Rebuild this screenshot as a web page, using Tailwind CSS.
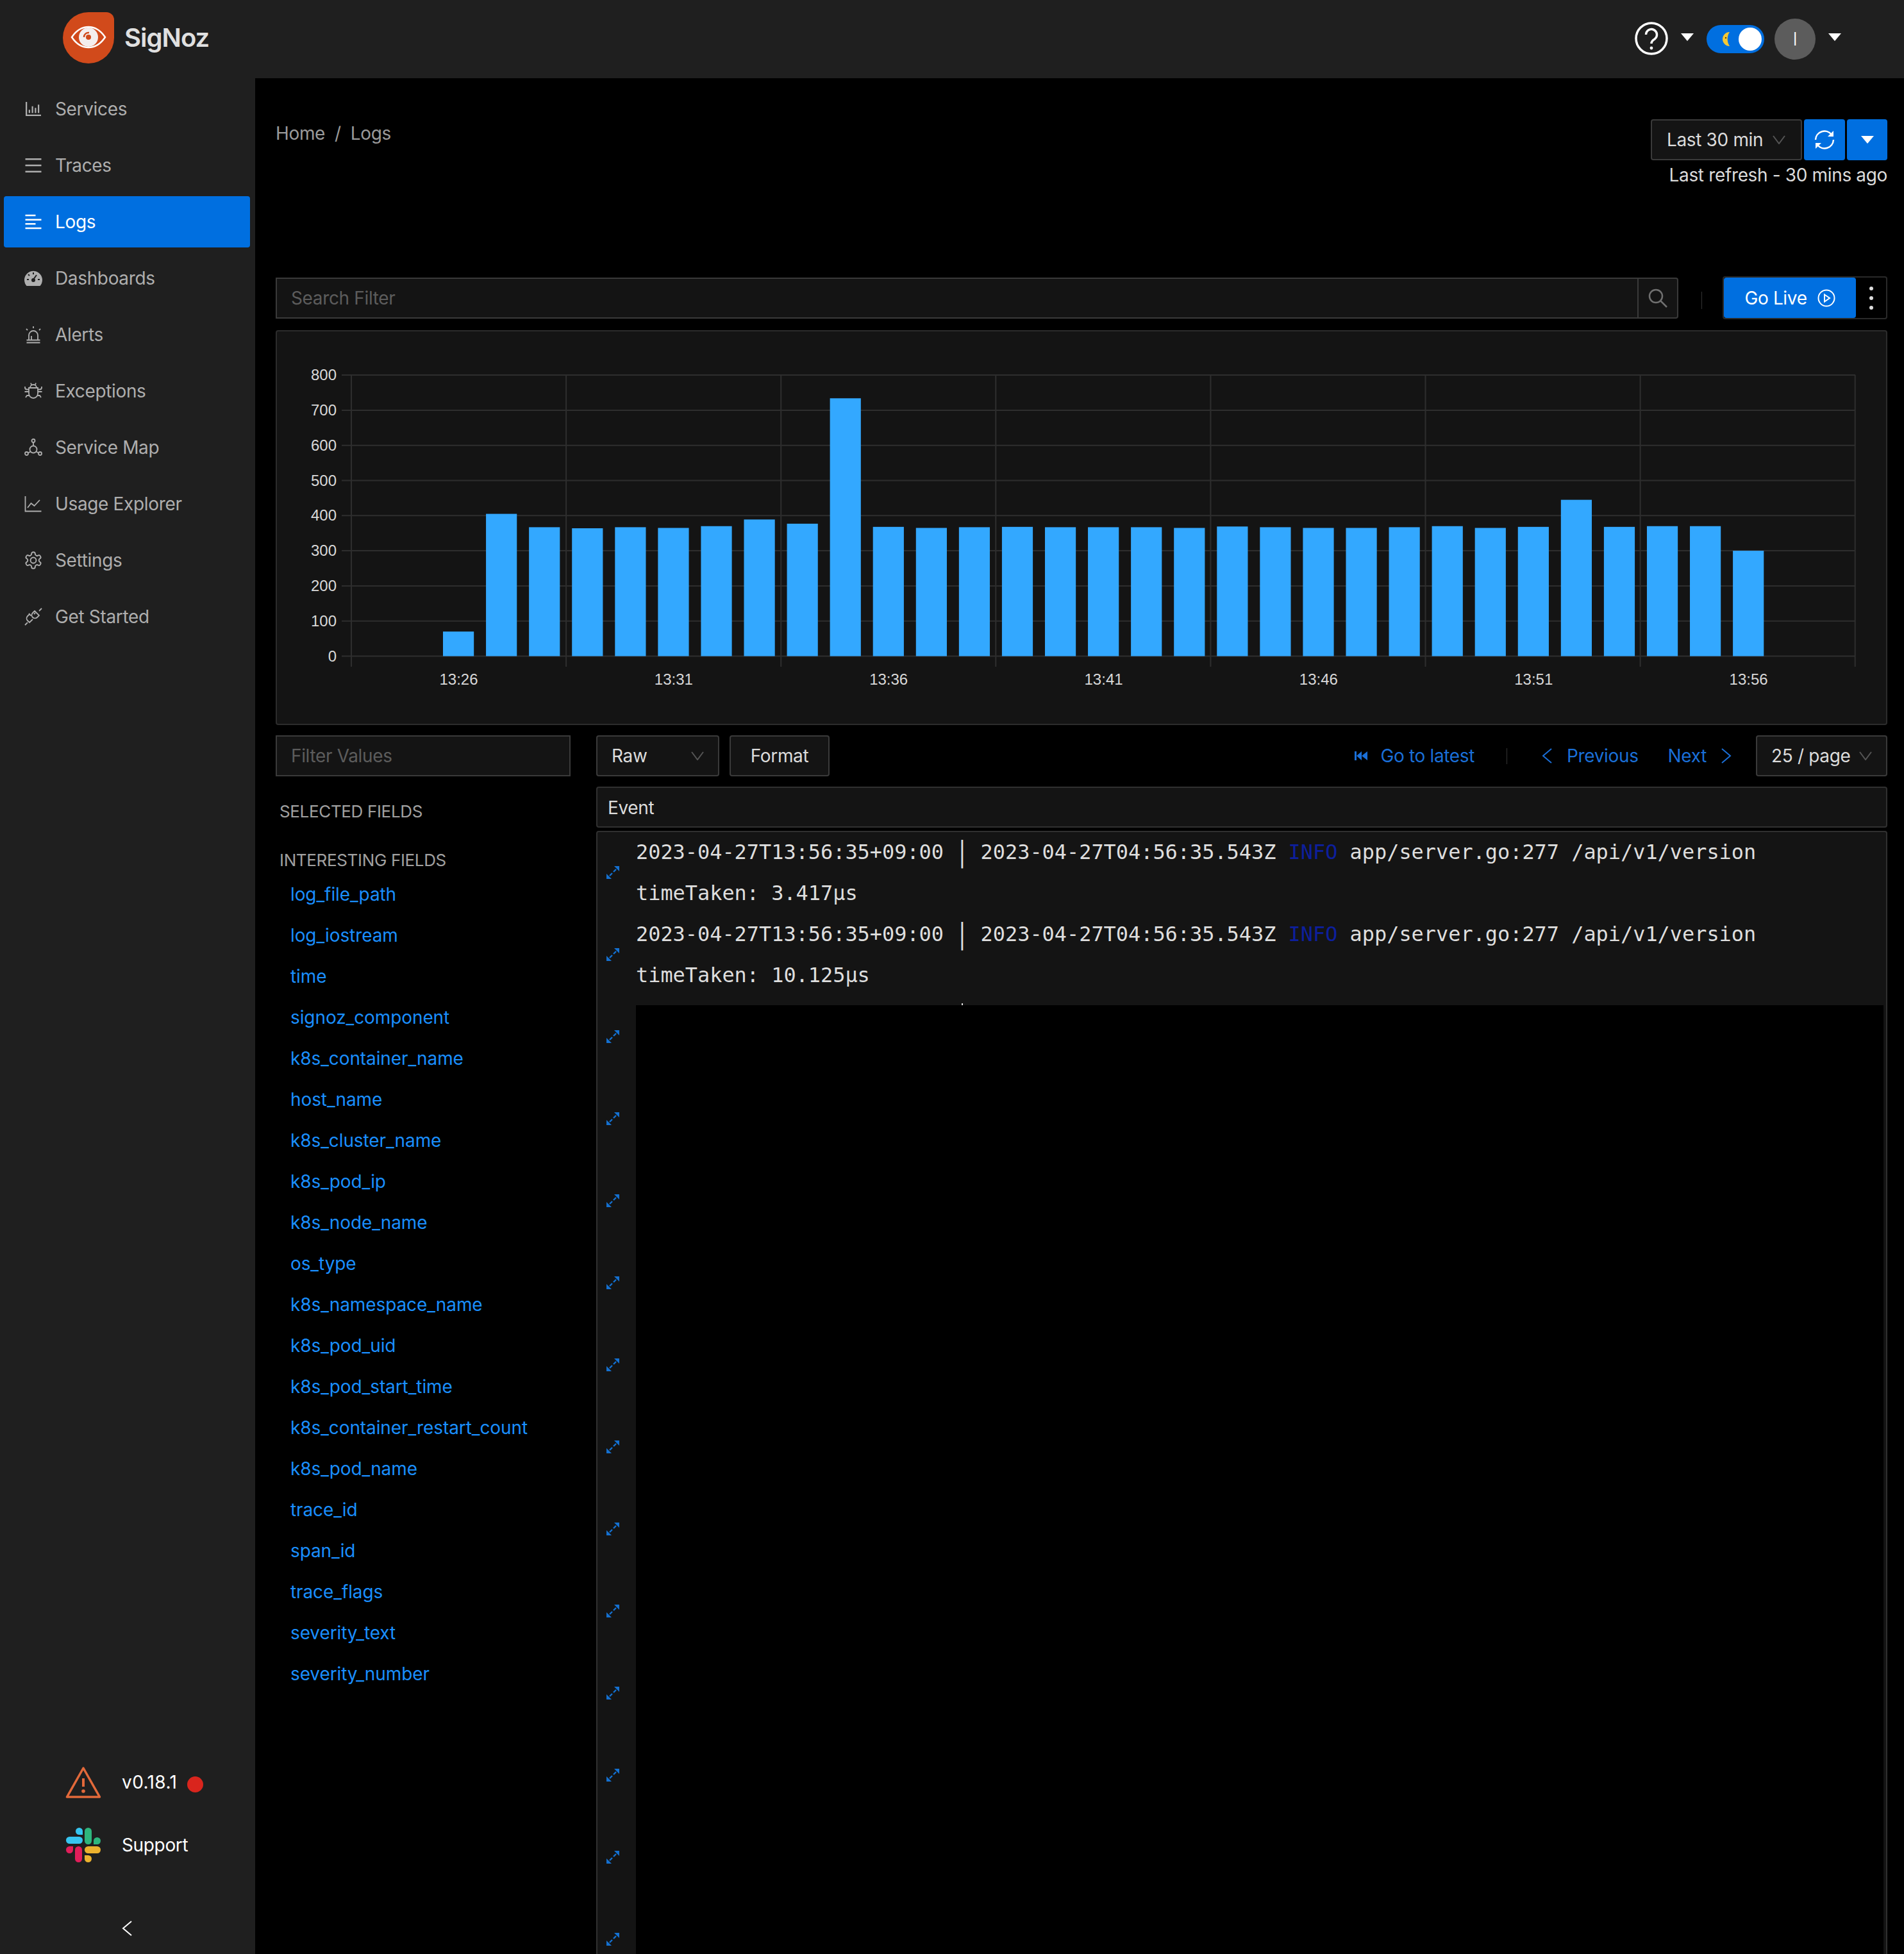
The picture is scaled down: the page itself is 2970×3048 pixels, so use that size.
<!DOCTYPE html>
<html lang="en">
<head>
    <meta charset="UTF-8">
    <title>SigNoz Logs</title>
    <script src="https://cdn.jsdelivr.net/npm/@tailwindcss/browser@4"></script>
</head>
<body class="bg-black font-['Inter',sans-serif] text-[28px] tracking-[-0.35px] text-[#dcdcdc]">
    <svg class="hidden">
        <symbol id="expand" viewBox="0 0 20 20">
            <path d="M11 9l4-4M9 11l-4 4" stroke="currentColor" stroke-width="2.400" fill="none"/>
            <path d="M12 0h8v8zM8 20H0v-8z" fill="currentColor"/>
        </symbol>
    </svg>

    <div class="flex flex-col w-[2970px] h-[3048px] overflow-hidden">
        <header class="flex items-center justify-between h-[122px] shrink-0 bg-[#1f1f1f]">
            <div class="flex items-center gap-[16px] pl-[98px] mb-[5px]">
                <svg class="w-[80px] h-[80px]" viewBox="0 0 80 80">
                    <path d="M40 0h28a12 12 0 0 1 12 12v28a40 40 0 0 1-80 0A40 40 0 0 1 40 0z" fill="#d14a1b"/>
                    <path d="M14 39C22 27 31 23 40 23s18 4 26 16C58 51 49 55 40 55S22 51 14 39z" fill="none" stroke="#fff" stroke-width="2.500"/>
                    <circle cx="40" cy="39" r="15" fill="#f4eeee"/>
                    <circle cx="40" cy="39" r="4" fill="#d14a1b"/>
                    <path d="M33 39a7 7 0 0 1 8-7" fill="none" stroke="#d14a1b" stroke-width="2.500"/>
                </svg>
                <span class="text-[40px] font-semibold text-[#e0e0e0] tracking-[-1px]">SigNoz</span>
            </div>
            <div class="flex items-center pr-[98px]">
                <svg class="w-[52px] h-[52px] mb-[2px]" viewBox="0 0 52 52" fill="none" stroke="#fff">
                    <circle cx="26" cy="26" r="24" stroke-width="3.500"/>
                    <path d="M17.500 20a8.500 8.500 0 1 1 13.500 7C27.500 29 26 31 26 34" stroke-width="3.500"/>
                    <circle cx="26" cy="41" r="2.400" fill="#fff" stroke="none"/>
                </svg>
                <svg class="w-[20px] h-[12px] ml-[20px] mb-[6px]" viewBox="0 0 20 12"><path d="M0 0h20L10 12z" fill="#fff"/></svg>
                <div class="flex items-center justify-end w-[90px] h-[44px] ml-[20px] pr-[4px] rounded-full bg-[#006fe0] relative">
                    <svg class="absolute left-[23px] top-[11px] w-[14px] h-[22px]" viewBox="0 0 14 22">
                        <path d="M13 0A11 11 0 1 0 13 22 20 20 0 0 1 13 0z" fill="#f5c836"/>
                        <circle cx="7" cy="9" r="1.200" fill="#5a4300"/>
                    </svg>
                    <div class="w-[36px] h-[36px] rounded-full bg-white"></div>
                </div>
                <div class="flex items-center justify-center w-[64px] h-[64px] ml-[16px] rounded-full bg-[#5c5c5c] text-white font-light">I</div>
                <svg class="w-[20px] h-[12px] ml-[20px] mb-[6px]" viewBox="0 0 20 12"><path d="M0 0h20L10 12z" fill="#fff"/></svg>
            </div>
        </header>

        <div class="flex flex-1 min-h-0">
            <aside class="flex flex-col w-[398px] shrink-0 bg-[#1f1f1f] pt-[8px]">
                <nav class="flex flex-col gap-[8px] pl-[6px] pr-[8px] text-[#aeaeae]">
                    <a class="flex items-center gap-[20px] h-[80px] pl-[32px]">
                        <svg class="w-[28px] h-[28px]" viewBox="64 64 896 896" fill="currentColor"><path d="M888 792H200V168c0-4.400-3.600-8-8-8h-56c-4.400 0-8 3.600-8 8v688c0 4.400 3.600 8 8 8h752c4.400 0 8-3.600 8-8v-56c0-4.400-3.600-8-8-8zm-600-80h56c4.400 0 8-3.600 8-8V560c0-4.400-3.600-8-8-8h-56c-4.400 0-8 3.600-8 8v144c0 4.400 3.600 8 8 8zm152 0h56c4.400 0 8-3.600 8-8V384c0-4.400-3.600-8-8-8h-56c-4.400 0-8 3.600-8 8v320c0 4.400 3.600 8 8 8zm152 0h56c4.400 0 8-3.600 8-8V462c0-4.400-3.600-8-8-8h-56c-4.400 0-8 3.600-8 8v242c0 4.400 3.600 8 8 8zm152 0h56c4.400 0 8-3.600 8-8V304c0-4.400-3.600-8-8-8h-56c-4.400 0-8 3.600-8 8v400c0 4.400 3.600 8 8 8z"/></svg>
                        Services
                    </a>
                    <a class="flex items-center gap-[20px] h-[80px] pl-[32px]">
                        <svg class="w-[28px] h-[28px]" viewBox="64 64 896 896" fill="currentColor"><path d="M904 160H120c-4.400 0-8 3.600-8 8v64c0 4.400 3.600 8 8 8h784c4.400 0 8-3.600 8-8v-64c0-4.400-3.600-8-8-8zm0 624H120c-4.400 0-8 3.600-8 8v64c0 4.400 3.600 8 8 8h784c4.400 0 8-3.600 8-8v-64c0-4.400-3.600-8-8-8zm0-312H120c-4.400 0-8 3.600-8 8v64c0 4.400 3.600 8 8 8h784c4.400 0 8-3.600 8-8v-64c0-4.400-3.600-8-8-8z"/></svg>
                        Traces
                    </a>
                    <a class="flex items-center gap-[20px] h-[80px] pl-[32px] rounded-[4px] bg-[#006fe0] text-white">
                        <svg class="w-[28px] h-[28px]" viewBox="64 64 896 896" fill="currentColor"><path d="M120 230h496c4.400 0 8-3.600 8-8v-60c0-4.400-3.600-8-8-8H120c-4.400 0-8 3.600-8 8v60c0 4.400 3.600 8 8 8zm0 424h496c4.400 0 8-3.600 8-8v-60c0-4.400-3.600-8-8-8H120c-4.400 0-8 3.600-8 8v60c0 4.400 3.600 8 8 8zm784 140H120c-4.400 0-8 3.600-8 8v60c0 4.400 3.600 8 8 8h784c4.400 0 8-3.600 8-8v-60c0-4.400-3.600-8-8-8zm0-424H120c-4.400 0-8 3.600-8 8v60c0 4.400 3.600 8 8 8h784c4.400 0 8-3.600 8-8v-60c0-4.400-3.600-8-8-8z"/></svg>
                        Logs
                    </a>
                    <a class="flex items-center gap-[20px] h-[80px] pl-[32px]">
                        <svg class="w-[28px] h-[28px]" viewBox="0 0 28 28">
                            <path d="M3.500 26A14 14 0 1 1 24.500 26z" fill="currentColor"/>
                            <path d="M14 16l5-7M14 5v3M6 8l2 2M4 16h3M21 16h3" stroke="#1f1f1f" stroke-width="2" fill="none"/>
                            <circle cx="14" cy="17" r="3" fill="#1f1f1f"/>
                        </svg>
                        Dashboards
                    </a>
                    <a class="flex items-center gap-[20px] h-[80px] pl-[32px]">
                        <svg class="w-[28px] h-[28px]" viewBox="0 0 28 28" fill="none" stroke="currentColor" stroke-width="1.800">
                            <path d="M7 22V15a7 7 0 0 1 14 0v7M3.500 22.500h21M3.500 26.500h21M11 22v-6M14 1v3M3 5l2 2M25 5l-2 2"/>
                        </svg>
                        Alerts
                    </a>
                    <a class="flex items-center gap-[20px] h-[80px] pl-[32px]">
                        <svg class="w-[28px] h-[28px]" viewBox="0 0 28 28" fill="none" stroke="currentColor" stroke-width="1.800">
                            <path d="M7 9h14v9a7 7 0 0 1-14 0zM9 9a5 5 0 0 1 10 0M1 7v1.500a3 3 0 0 0 3 3h3M27 7v1.500a3 3 0 0 1-3 3h-3M0.500 15h6.500M27.500 15h-6.500M2 24l2-3h3.500M26 24l-2-3h-3.500M10 1.500l1 2.500M18 1.500l-1 2.500"/>
                        </svg>
                        Exceptions
                    </a>
                    <a class="flex items-center gap-[20px] h-[80px] pl-[32px]">
                        <svg class="w-[28px] h-[28px]" viewBox="0 0 28 28" fill="none" stroke="currentColor" stroke-width="1.800">
                            <circle cx="14" cy="3.500" r="2.500"/><circle cx="3.500" cy="23.500" r="2.500"/><circle cx="24.500" cy="23.500" r="2.500"/><circle cx="14" cy="17" r="5.500"/>
                            <path d="M14 6v5.500M9.500 20.500L6 22.500M18.500 20.500L22 22.500"/>
                        </svg>
                        Service Map
                    </a>
                    <a class="flex items-center gap-[20px] h-[80px] pl-[32px]">
                        <svg class="w-[28px] h-[28px]" viewBox="0 0 28 28" fill="none" stroke="currentColor" stroke-width="1.800">
                            <path d="M1.500 2v23.500h25M5 20l5.500-7 5 4L24 8"/>
                        </svg>
                        Usage Explorer
                    </a>
                    <a class="flex items-center gap-[20px] h-[80px] pl-[32px]">
                        <svg class="w-[28px] h-[28px]" viewBox="1 1 22 22" fill="none" stroke="currentColor" stroke-width="1.500">
                            <path d="M12.220 2h-.44a2 2 0 0 0-2 2v.18a2 2 0 0 1-1 1.730l-.43.25a2 2 0 0 1-2 0l-.15-.08a2 2 0 0 0-2.730.73l-.22.38a2 2 0 0 0 .73 2.730l.15.1a2 2 0 0 1 1 1.720v.51a2 2 0 0 1-1 1.740l-.15.09a2 2 0 0 0-.73 2.730l.22.38a2 2 0 0 0 2.730.73l.15-.08a2 2 0 0 1 2 0l.43.25a2 2 0 0 1 1 1.730V20a2 2 0 0 0 2 2h.44a2 2 0 0 0 2-2v-.18a2 2 0 0 1 1-1.730l.43-.25a2 2 0 0 1 2 0l.15.08a2 2 0 0 0 2.730-.73l.22-.39a2 2 0 0 0-.73-2.730l-.15-.08a2 2 0 0 1-1-1.740v-.5a2 2 0 0 1 1-1.740l.15-.09a2 2 0 0 0 .73-2.730l-.22-.38a2 2 0 0 0-2.730-.73l-.15.08a2 2 0 0 1-2 0l-.43-.25a2 2 0 0 1-1-1.730V4a2 2 0 0 0-2-2z"/>
                            <circle cx="12" cy="12" r="3.500"/>
                        </svg>
                        Settings
                    </a>
                    <a class="flex items-center gap-[20px] h-[80px] pl-[32px]">
                        <svg class="w-[28px] h-[28px]" viewBox="0 0 28 28" fill="none" stroke="currentColor" stroke-width="1.800">
                            <path d="M16 5l7 7-3 3a5 5 0 0 1-7 0a5 5 0 0 1 0-7zM23 5l4-4M10.500 12.500L7 9M8 10L5 13a5 5 0 0 0 0 7l3 3 5-5M1 27l4-4M17 8l-2 2"/>
                        </svg>
                        Get Started
                    </a>
                </nav>

                <div class="mt-auto flex flex-col text-white">
                    <div class="flex items-center h-[64px] pl-[102px]">
                        <svg class="w-[56px] h-[50px]" viewBox="0 0 56 50" fill="none">
                            <path d="M28 3L2.500 48h51z" stroke="#e2693a" stroke-width="3.500" stroke-linejoin="round"/>
                            <path d="M28 19v13" stroke="#e2693a" stroke-width="4"/>
                            <circle cx="28" cy="39" r="2.800" fill="#e2693a"/>
                        </svg>
                        <span class="ml-[32px] tracking-[0.4px]">v0.18.1</span>
                        <span class="w-[25px] h-[25px] ml-[16px] mt-[6px] rounded-full bg-[#d9251d]"></span>
                    </div>
                    <div class="flex items-center h-[64px] mt-[34px] pl-[103px]">
                        <svg class="w-[54px] h-[54px]" viewBox="0 0 54 54">
                            <rect x="15" y="0" width="11" height="11" rx="5.500" fill="#36c5f0"/><rect x="20" y="5" width="6" height="6" fill="#36c5f0"/>
                            <rect x="0" y="14" width="26" height="11" rx="5.500" fill="#36c5f0"/>
                            <rect x="29" y="0" width="11" height="26" rx="5.500" fill="#2eb67d"/>
                            <rect x="43" y="15" width="11" height="11" rx="5.500" fill="#2eb67d"/><rect x="43" y="20" width="6" height="6" fill="#2eb67d"/>
                            <rect x="0" y="29" width="11" height="11" rx="5.500" fill="#e01e5a"/><rect x="5" y="29" width="6" height="6" fill="#e01e5a"/>
                            <rect x="14" y="29" width="11" height="25" rx="5.500" fill="#e01e5a"/>
                            <rect x="29" y="29" width="25" height="11" rx="5.500" fill="#ecb22e"/>
                            <rect x="29" y="43" width="11" height="11" rx="5.500" fill="#ecb22e"/><rect x="29" y="43" width="6" height="6" fill="#ecb22e"/>
                        </svg>
                        <span class="ml-[33px]">Support</span>
                    </div>
                    <div class="flex items-center h-[30px] mt-[83px] mb-[25px] pl-[190px]">
                        <svg class="w-[16px] h-[24px]" viewBox="0 0 16 24" fill="none" stroke="#fff" stroke-width="2"><path d="M15 1L2 12l13 11"/></svg>
                    </div>
                </div>
            </aside>

            <main class="flex-1 min-w-0 pt-[64px] pl-[32px] pr-[26px]">
                <div class="flex justify-between h-[245px]">
                    <div class="flex gap-[15px] h-[44px] items-center text-[#9a9a9a]">
                        <span>Home</span><span>/</span><span>Logs</span>
                    </div>
                    <div class="flex flex-col items-end">
                        <div class="flex gap-[3px]">
                            <div class="flex items-center justify-between w-[236px] h-[64px] pl-[23px] pr-[24px] border-2 border-[#3a3a3a] rounded-[4px] bg-[#141414]">
                                <span>Last 30 min</span>
                                <svg class="w-[20px] h-[14px]" viewBox="0 0 20 14" fill="none" stroke="#555" stroke-width="2"><path d="M1 1l9 12 9-12"/></svg>
                            </div>
                            <div class="flex items-center justify-center w-[64px] h-[64px] rounded-[4px] bg-[#006fe0]">
                                <svg class="w-[32px] h-[32px]" viewBox="0 0 32 32" fill="none" stroke="#fff" stroke-width="2.500">
                                    <path d="M2 16A14 14 0 0 1 27 8M30 16A14 14 0 0 1 5 24"/>
                                    <path d="M30 2v9h-9z" fill="#fff" stroke="none"/><path d="M2 30v-9h9z" fill="#fff" stroke="none"/>
                                </svg>
                            </div>
                            <div class="flex items-center justify-center w-[63px] h-[64px] rounded-[4px] bg-[#006fe0]">
                                <svg class="w-[20px] h-[12px]" viewBox="0 0 20 12"><path d="M0 0h20L10 12z" fill="#fff"/></svg>
                            </div>
                        </div>
                        <span class="mt-[2px]">Last refresh - 30 mins ago</span>
                    </div>
                </div>

                <div class="flex items-center h-[67px]">
                    <div class="flex items-center flex-1 h-[64px] pl-[22px] border-2 border-[#3a3a3a] bg-[#141414] text-[#5c5c5c]">Search Filter</div>
                    <div class="flex items-center justify-center w-[62px] h-[64px] border-2 border-l-0 border-[#3a3a3a] rounded-r-[4px] bg-[#141414]">
                        <svg class="w-[30px] h-[30px]" viewBox="0 0 30 30" fill="none" stroke="#707070" stroke-width="2.500"><circle cx="12" cy="12" r="10"/><path d="M19 19l10 10"/></svg>
                    </div>
                    <div class="w-[1px] h-[27px] ml-[36px] mr-[32px] mt-[8px] bg-[#333]"></div>
                    <div class="flex items-center w-[257px] h-[67px] border-2 border-[#2a2a2a] rounded-[4px]">
                        <div class="flex items-center justify-center gap-[16px] w-[206px] h-[63px] rounded-[4px] bg-[#006fe0] text-white">
                            Go Live
                            <svg class="w-[28px] h-[28px]" viewBox="0 0 28 28" fill="none" stroke="#fff" stroke-width="2"><circle cx="14" cy="14" r="12.500"/><path d="M11 8.500l8 5.500-8 5.500z"/></svg>
                        </div>
                        <div class="flex flex-col items-center gap-[9px] flex-1">
                            <span class="w-[6px] h-[6px] rounded-full bg-[#ddd]"></span>
                            <span class="w-[6px] h-[6px] rounded-full bg-[#ddd]"></span>
                            <span class="w-[6px] h-[6px] rounded-full bg-[#ddd]"></span>
                        </div>
                    </div>
                </div>

                <div class="mt-[17px] h-[616px] border-2 border-[#2c2c2c] rounded-[4px] bg-[#141414]">
                    <svg id="chart" class="block w-full h-full" viewBox="432 517 2510 612" preserveAspectRatio="none"></svg>
                </div>

                <div class="flex gap-[40px] mt-[16px]">
                    <div class="w-[460px] shrink-0">
                        <div class="flex items-center h-[64px] pl-[22px] border-2 border-[#3a3a3a] bg-[#141414] text-[#5c5c5c]">Filter Values</div>
                        <div class="flex items-center h-[40px] mt-[34px] pl-[6px] text-[26px] text-[#a0a0a0]">SELECTED FIELDS</div>
                        <div class="flex items-center h-[40px] mt-[36px] pl-[6px] text-[26px] text-[#a0a0a0]">INTERESTING FIELDS</div>
                        <ul class="mt-[2px] pl-[23px] text-[#1a8fff] tracking-[-0.1px]">
                            <li class="flex items-center h-[64px]">log_file_path</li>
                            <li class="flex items-center h-[64px]">log_iostream</li>
                            <li class="flex items-center h-[64px]">time</li>
                            <li class="flex items-center h-[64px]">signoz_component</li>
                            <li class="flex items-center h-[64px]">k8s_container_name</li>
                            <li class="flex items-center h-[64px]">host_name</li>
                            <li class="flex items-center h-[64px]">k8s_cluster_name</li>
                            <li class="flex items-center h-[64px]">k8s_pod_ip</li>
                            <li class="flex items-center h-[64px]">k8s_node_name</li>
                            <li class="flex items-center h-[64px]">os_type</li>
                            <li class="flex items-center h-[64px]">k8s_namespace_name</li>
                            <li class="flex items-center h-[64px]">k8s_pod_uid</li>
                            <li class="flex items-center h-[64px]">k8s_pod_start_time</li>
                            <li class="flex items-center h-[64px]">k8s_container_restart_count</li>
                            <li class="flex items-center h-[64px]">k8s_pod_name</li>
                            <li class="flex items-center h-[64px]">trace_id</li>
                            <li class="flex items-center h-[64px]">span_id</li>
                            <li class="flex items-center h-[64px]">trace_flags</li>
                            <li class="flex items-center h-[64px]">severity_text</li>
                            <li class="flex items-center h-[64px]">severity_number</li>
                        </ul>
                    </div>

                    <div class="flex flex-col flex-1 min-w-0 h-[1901px]">
                        <div class="flex items-center h-[64px] shrink-0">
                            <div class="flex items-center justify-between w-[192px] h-[64px] pl-[22px] pr-[22px] border-2 border-[#3a3a3a] rounded-[4px] bg-[#141414]">
                                Raw
                                <svg class="w-[20px] h-[14px]" viewBox="0 0 20 14" fill="none" stroke="#555" stroke-width="2"><path d="M1 1l9 12 9-12"/></svg>
                            </div>
                            <div class="flex items-center justify-center w-[156px] h-[64px] ml-[16px] border-2 border-[#3a3a3a] rounded-[4px] bg-[#141414]">Format</div>
                            <div class="flex items-center ml-auto text-[#1a6fd8]">
                                <svg class="w-[20px] h-[14px]" viewBox="0 0 20 14" fill="currentColor"><path d="M0 0h3v14H0zM11 0v14L3 7zM20 0v14l-9-7z"/></svg>
                                <span class="ml-[20px]">Go to latest</span>
                                <span class="w-[1px] h-[25px] ml-[50px] mr-[54px] bg-[#333]"></span>
                                <svg class="w-[16px] h-[24px]" viewBox="0 0 16 24" fill="none" stroke="currentColor" stroke-width="2"><path d="M15 1L2 12l13 11"/></svg>
                                <span class="ml-[23px]">Previous</span>
                                <span class="ml-[46px]">Next</span>
                                <svg class="w-[16px] h-[24px] ml-[23px]" viewBox="0 0 16 24" fill="none" stroke="currentColor" stroke-width="2"><path d="M1 1l13 11L1 23"/></svg>
                            </div>
                            <div class="flex items-center justify-between w-[205px] h-[64px] ml-[38px] pl-[22px] pr-[22px] border-2 border-[#3a3a3a] rounded-[4px] bg-[#141414] whitespace-nowrap">
                                25 / page
                                <svg class="w-[20px] h-[14px]" viewBox="0 0 20 14" fill="none" stroke="#555" stroke-width="2"><path d="M1 1l9 12 9-12"/></svg>
                            </div>
                        </div>

                        <div class="flex items-center h-[64px] mt-[16px] pl-[16px] pt-[2px] shrink-0 border-2 border-[#303030] rounded-[4px] bg-[#141414]">Event</div>

                        <div class="flex flex-1 min-h-0 mt-[5px] overflow-hidden border-2 border-b-0 border-[#303030] rounded-t-[4px] bg-[#141414]">
                            <div class="flex flex-col gap-[108px] w-[60px] shrink-0 pt-[53px] pl-[14px] text-[#1470d0]">
                                <svg class="w-[20px] h-[20px] shrink-0"><use href="#expand"/></svg>
                                <svg class="w-[20px] h-[20px] shrink-0"><use href="#expand"/></svg>
                                <svg class="w-[20px] h-[20px] shrink-0"><use href="#expand"/></svg>
                                <svg class="w-[20px] h-[20px] shrink-0"><use href="#expand"/></svg>
                                <svg class="w-[20px] h-[20px] shrink-0"><use href="#expand"/></svg>
                                <svg class="w-[20px] h-[20px] shrink-0"><use href="#expand"/></svg>
                                <svg class="w-[20px] h-[20px] shrink-0"><use href="#expand"/></svg>
                                <svg class="w-[20px] h-[20px] shrink-0"><use href="#expand"/></svg>
                                <svg class="w-[20px] h-[20px] shrink-0"><use href="#expand"/></svg>
                                <svg class="w-[20px] h-[20px] shrink-0"><use href="#expand"/></svg>
                                <svg class="w-[20px] h-[20px] shrink-0"><use href="#expand"/></svg>
                                <svg class="w-[20px] h-[20px] shrink-0"><use href="#expand"/></svg>
                                <svg class="w-[20px] h-[20px] shrink-0"><use href="#expand"/></svg>
                                <svg class="w-[20px] h-[20px] shrink-0"><use href="#expand"/></svg>
                            </div>
                            <div class="flex flex-col flex-1 min-w-0 pr-[4px] font-['DejaVu_Sans_Mono',monospace] text-[31.9px] tracking-normal text-[#dedede] whitespace-pre">
                                <div class="flex items-center h-[64px] shrink-0"><span>2023-04-27T13:56:35+09:00 <span class="inline-block scale-y-[1.4]">|</span> 2023-04-27T04:56:35.543Z <span class="text-[#0d1f9c]">INFO</span> app/server.go:277 /api/v1/version</span></div>
                                <div class="flex items-center h-[64px] shrink-0">timeTaken: 3.417µs</div>
                                <div class="flex items-center h-[64px] shrink-0"><span>2023-04-27T13:56:35+09:00 <span class="inline-block scale-y-[1.4]">|</span> 2023-04-27T04:56:35.543Z <span class="text-[#0d1f9c]">INFO</span> app/server.go:277 /api/v1/version</span></div>
                                <div class="flex items-center h-[64px] shrink-0">timeTaken: 10.125µs</div>
                                <div class="flex items-end h-[14px] shrink-0">
                                    <div class="w-[2px] h-[3px] ml-[508px] bg-[#dedede]"></div>
                                </div>
                                <div class="flex-1 bg-black"></div>
                            </div>
                        </div>
                    </div>
                </div>
            </main>
        </div>
    </div>

    <script>
        // log counts per minute, 13:26 to 13:56
        const counts = [70, 405, 367, 364, 367, 365, 370, 389, 377, 734, 368, 365, 367, 368, 367, 367, 367, 365, 369, 367, 365, 365, 367, 370, 365, 368, 445, 368, 370, 370, 300];
        const chart = document.getElementById('chart');
        const NS = 'http://www.w3.org/2000/svg';

        function add(tag, attrs, text) {
            const el = document.createElementNS(NS, tag);
            for (const key in attrs) el.setAttribute(key, attrs[key]);
            if (text) el.textContent = text;
            chart.appendChild(el);
        }

        const labelStyle = { fill: '#d9d9d9', 'font-size': 24, 'font-family': 'Liberation Sans, sans-serif', 'letter-spacing': 0 };
        const zeroY = 1023.5;
        const perUnit = 0.548;

        for (let i = 0; i <= 8; i++) {
            const y = zeroY - i * 100 * perUnit;
            add('line', { x1: 533, x2: 2894, y1: y, y2: y, stroke: '#2e2e2e', 'stroke-width': 2 });
            add('text', { x: 525, y: y + 8, 'text-anchor': 'end', ...labelStyle }, String(i * 100));
        }
        for (let i = 0; i < 8; i++) {
            const x = 548 + i * 335.1;
            add('line', { x1: x, x2: x, y1: 585, y2: 1040, stroke: '#2e2e2e', 'stroke-width': 2 });
        }
        counts.forEach((count, i) => {
            const x = 691 + i * 67.07;
            add('rect', { x: x, y: zeroY - count * perUnit, width: 48.2, height: count * perUnit, fill: '#33a8ff' });
            if (i % 5 === 0) {
                const minute = 26 + i;
                add('text', { x: x + 24.5, y: 1068, 'text-anchor': 'middle', ...labelStyle }, '13:' + minute);
            }
        });
    </script>
</body>
</html>
